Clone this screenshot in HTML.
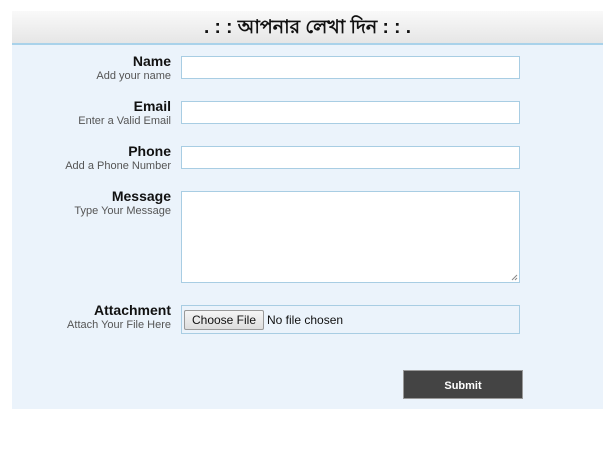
<!DOCTYPE html>
<html><head><meta charset="utf-8"><style>
body{margin:0;background:#fff;font-family:"Liberation Sans",Arial,sans-serif;width:612px;height:450px;position:relative;overflow:hidden}
.box{position:absolute;left:12px;top:11px;width:591px;height:398px;background:#ebf3fb}
.hd{position:absolute;left:0;top:0;width:591px;height:32px;background:linear-gradient(#f9f9f9,#e6e6e6);border-bottom:2px solid #a9d2ea;text-align:center;font-size:19px;font-weight:bold;line-height:34px;color:#111}
.lab{position:absolute;right:432px;text-align:right}
.lab b{display:block;font-size:14px;color:#111;line-height:15px}
.lab span{display:block;font-size:11px;color:#555;line-height:14px}
.in{position:absolute;left:169px;width:337px;background:#fff;border:1px solid #a8cde3}
.btn{position:absolute;left:391px;top:359px;width:118px;height:27px;background:#444;border:1px solid #999;color:#fff;font-weight:bold;font-size:11px;text-align:center;line-height:30px}
</style></head><body>
<div class="box">
<div class="hd">. : : আপনার লেখা দিন : : .</div>
<div class="lab" style="top:43px"><b>Name</b><span>Add your name</span></div>
<div class="in" style="top:45px;height:21px"></div>
<div class="lab" style="top:88px"><b>Email</b><span>Enter a Valid Email</span></div>
<div class="in" style="top:90px;height:21px"></div>
<div class="lab" style="top:133px"><b>Phone</b><span>Add a Phone Number</span></div>
<div class="in" style="top:135px;height:21px"></div>
<div class="lab" style="top:178px"><b>Message</b><span>Type Your Message</span></div>
<div class="in" style="top:180px;height:90px"><svg style="position:absolute;right:1px;bottom:1px" width="7" height="7"><path d="M6 1L1 6M6 4L4 6" stroke="#888"/></svg></div>
<div class="lab" style="top:292px"><b>Attachment</b><span>Attach Your File Here</span></div>
<div class="in" style="top:294px;height:27px;background:#ebf3fb">
<div style="position:absolute;left:2px;top:4px;width:78px;height:18px;border:1px solid #999;border-radius:2px;background:linear-gradient(#f5f5f5,#ddd);font-size:12px;line-height:18px;text-align:center;color:#111">Choose File</div>
<div style="position:absolute;left:85px;top:4px;font-size:12px;line-height:20px;color:#111">No file chosen</div>
</div>
<div class="btn">Submit</div>
</div>
</body></html>
